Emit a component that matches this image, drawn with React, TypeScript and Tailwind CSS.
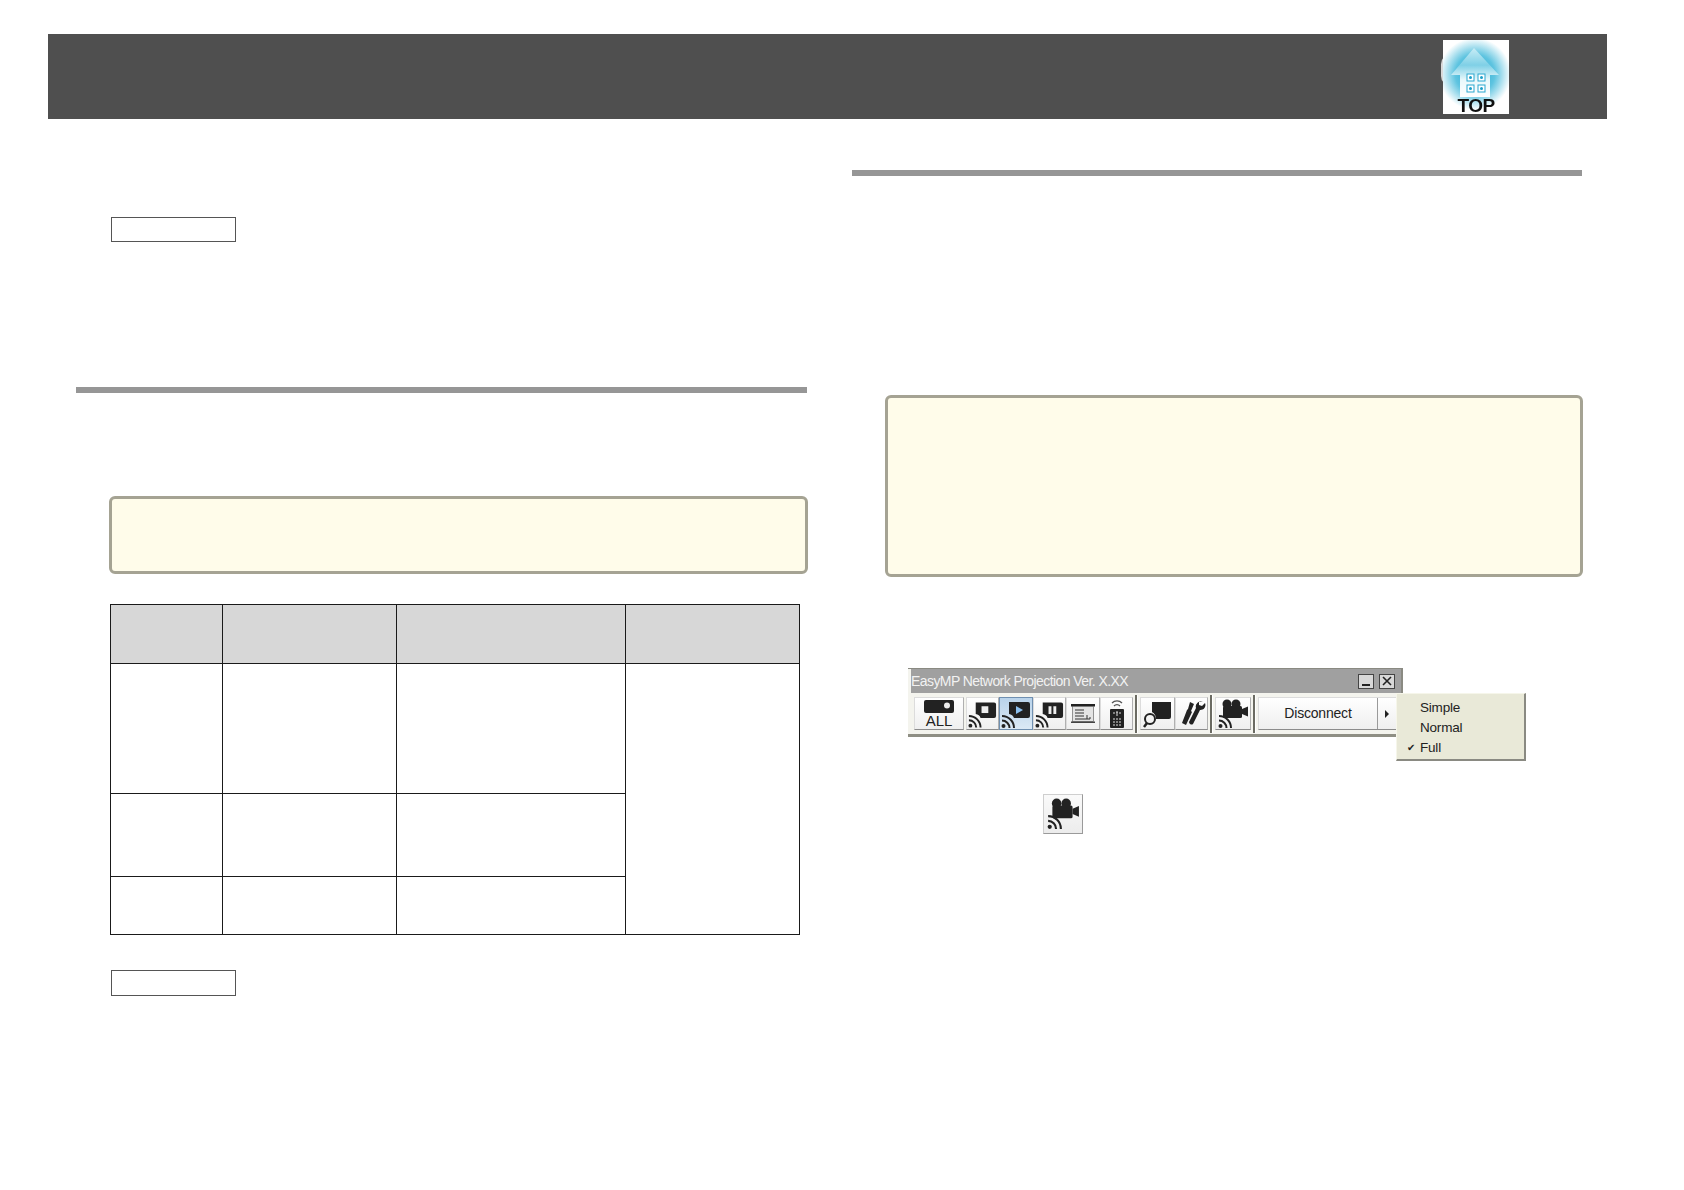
import React from 'react';

function Wifi({ color = '#222' }: { color?: string }) {
  return (
    <g fill="none" stroke={color} strokeWidth="2">
      <circle cx="3.5" cy="28" r="2" fill={color} stroke="none" />
      <path d="M2 22.5a7.5 7.5 0 0 1 7.5 7.5" />
      <path d="M2 18a12 12 0 0 1 12 12" />
    </g>
  );
}

function Screen({ children }: { children?: React.ReactNode }) {
  return (
    <svg width="32" height="32" viewBox="0 0 32 32">
      <path d="M9 4h19a2 2 0 0 1 2 2v12a2 2 0 0 1-2 2H14a6 6 0 0 0-5-4z" fill="#222" />
      {children}
      <Wifi />
    </svg>
  );
}

function ToolButton({ children, active = false, w = 'w-[33px]' }: { children: React.ReactNode; active?: boolean; w?: string }) {
  return (
    <div
      className={`${w} h-[33px] flex items-center justify-center border ${
        active
          ? 'border-[#6f8fb0] bg-gradient-to-b from-[#b9d3ea] to-[#dbe9f5]'
          : 'border-[#dcdcdc] border-b-[#8c8c8c] border-r-[#b0b0b0] bg-gradient-to-b from-white to-[#efefef]'
      }`}
    >
      {children}
    </div>
  );
}

function Divider() {
  return <div className="w-[3px] h-[38px] bg-[#6b6b62] border-r border-white mx-[2px]" />;
}

function CameraIcon({ size = 32 }: { size?: number }) {
  return (
    <svg width={size} height={size} viewBox="0 0 32 32">
      <circle cx="10" cy="6" r="4.5" fill="#222" />
      <circle cx="19" cy="6" r="4.5" fill="#222" />
      <rect x="6" y="8" width="19" height="12" rx="1.5" fill="#222" />
      <path d="M25 11l6-2.500v10L25 16z" fill="#222" />
      <Wifi />
    </svg>
  );
}

function Toolbar() {
  return (
    <div className="relative w-[496px] ml-[23px] mt-[91px] blur-[0.3px]">
      <div className="w-[495px] border-t border-r-2 border-[#8a8a82] bg-[#f4f4ee]">
        <div className="h-[24px] ml-[3px] bg-[#a0a0a0] flex items-center justify-between pr-[6px]">
          <span className="text-[14px] leading-none text-[#f2f2f2] font-['Liberation_Sans',sans-serif] tracking-[-0.57px]">
            EasyMP Network Projection Ver. X.XX
          </span>
          <div className="flex gap-[5px]">
            <div className="w-[16px] h-[15px] border border-[#444] bg-[#d8d8d8] flex items-end justify-center pb-[2px]">
              <div className="w-[8px] h-[2px] bg-[#222]" />
            </div>
            <div className="w-[16px] h-[15px] border border-[#444] bg-[#d8d8d8] flex items-center justify-center">
              <svg width="10" height="10" viewBox="0 0 10 10">
                <path d="M1 1l8 8M9 1l-8 8" stroke="#222" strokeWidth="1.6" />
              </svg>
            </div>
          </div>
        </div>
        <div className="h-[44px] flex items-center pl-[6px] border-b-[3px] border-[#8f8f84]">
          <ToolButton w="w-[50px]">
            <div className="flex flex-col items-center">
              <svg width="32" height="15" viewBox="0 0 32 15">
                <rect x="1" y="1" width="30" height="13" rx="2" fill="#222" />
                <circle cx="24" cy="6.500" r="3" fill="#eee" />
              </svg>
              <span className="text-[15px] leading-[14px] text-[#222] font-['Liberation_Sans',sans-serif]">ALL</span>
            </div>
          </ToolButton>
          <div className="w-[2px]" />
          <ToolButton>
            <Screen><rect x="15" y="8" width="7" height="7" fill="#eee" /></Screen>
          </ToolButton>
          <ToolButton w="w-[34px]" active>
            <Screen><path d="M16 8l7 4-7 4z" fill="#8cc0ee" /></Screen>
          </ToolButton>
          <ToolButton>
            <Screen><path d="M15 8h3v8h-3zM20 8h3v8h-3z" fill="#eee" /></Screen>
          </ToolButton>
          <ToolButton w="w-[34px]">
            <svg width="28" height="28" viewBox="0 0 28 28">
              <rect x="2" y="4" width="24" height="2.500" fill="#222" />
              <rect x="3.500" y="6.500" width="21" height="15" fill="#e4e4e4" stroke="#555" strokeWidth=".6" />
              <path d="M6 10h9M6 13h9M6 16h9M6 19h15M18 15v4M21 17v2" stroke="#333" strokeWidth="1" />
              <rect x="2" y="21.500" width="24" height="1.500" fill="#444" />
            </svg>
          </ToolButton>
          <ToolButton>
            <svg width="22" height="30" viewBox="0 0 22 30">
              <path d="M6 4a7 7 0 0 1 10 0M8 7a4 4 0 0 1 6 0" fill="none" stroke="#555" strokeWidth="1.300" />
              <rect x="4" y="10" width="14" height="19" rx="1" fill="#222" />
              <path d="M7 14h8M11 12v5M7 20h8M7 23h8M7 26h8" stroke="#ddd" strokeWidth="1" strokeDasharray="2 1" />
            </svg>
          </ToolButton>
          <Divider />
          <ToolButton w="w-[35px]">
            <svg width="32" height="32" viewBox="0 0 32 32">
              <path d="M10 4h19v15a2 2 0 0 1-2 2H14a8 8 0 0 0-4-7z" fill="#222" />
              <circle cx="8" cy="21" r="5" fill="none" stroke="#222" strokeWidth="2" />
              <path d="M5 25l-3 4" stroke="#222" strokeWidth="2.500" />
            </svg>
          </ToolButton>
          <ToolButton>
            <svg width="30" height="30" viewBox="0 0 30 30">
              <path d="M13 3l4 2-3 7 1 1-6 13-4-2 5-13 1-1z" fill="#222" />
              <path d="M26 3a5 5 0 0 0-7 6l-7 14a2.500 2.500 0 0 0 4 2l7-14a5 5 0 0 0 5-7l-3 3-3-1 0-3z" fill="#222" />
            </svg>
          </ToolButton>
          <Divider />
          <ToolButton w="w-[36px]"><CameraIcon /></ToolButton>
          <Divider />
          <div className="flex h-[33px] border-[#dcdcdc] border border-b-[#8c8c8c] bg-gradient-to-b from-white to-[#efefef]">
            <div className="w-[118px] flex items-center justify-center text-[14px] tracking-[-0.2px] text-[#222] font-['Liberation_Sans',sans-serif]">
              Disconnect
            </div>
            <div className="w-[19px] border-l border-[#9a9a9a] flex items-center justify-center">
              <div className="w-0 h-0 border-y-[4px] border-y-transparent border-l-[4px] border-l-[#222]" />
            </div>
          </div>
        </div>
      </div>
      {/* popup menu */}
      <div className="absolute left-[488px] top-[25px] w-[130px] h-[68px] bg-[#e9e9d8] border-t border-l border-[#f6f6ea] border-r-2 border-b-2 border-r-[#8a8a82] border-b-[#8a8a82] flex flex-col pt-[4px] text-[13.500px] tracking-[-0.2px] leading-[20px] text-[#222] font-['Liberation_Sans',sans-serif]">
        <div className="pl-[23px]">Simple</div>
        <div className="pl-[23px]">Normal</div>
        <div className="pl-[23px] relative">
          <span className="absolute left-[10px] top-0 text-[10px]">✔</span>
          Full
        </div>
      </div>
    </div>
  );
}

function TopIcon() {
  return (
    <div className="relative">
      {/* the disc peeks out past the white plate */}
      <div className="absolute left-[-2px] top-[14px] w-[10px] h-[32px] rounded-l-full bg-[#d9d9d9]" />
      <div className="relative w-[66px] h-[74px] bg-white blur-[0.4px]">
        <svg width="66" height="74" viewBox="0 0 66 74">
          <defs>
            <radialGradient id="glow" cx="50%" cy="50%" r="50%">
              <stop offset="0%" stopColor="#1aa5d0" />
              <stop offset="55%" stopColor="#5fc4e0" />
              <stop offset="100%" stopColor="#ffffff" />
            </radialGradient>
            <linearGradient id="arrow" x1="0" y1="0" x2="0" y2="1">
              <stop offset="0%" stopColor="#c8edf6" />
              <stop offset="35%" stopColor="#7fd0e6" />
              <stop offset="65%" stopColor="#e8f8fb" />
              <stop offset="100%" stopColor="#ffffff" />
            </linearGradient>
          </defs>
          <circle cx="32" cy="34" r="36" fill="url(#glow)" />
          <path d="M31 8L56 35H47V57H17V35H8z" fill="url(#arrow)" />
          <g fill="#ffffff" stroke="#2aa7cf" strokeWidth="1">
            <rect x="24" y="34" width="7" height="7" />
            <rect x="35" y="34" width="7" height="7" />
            <rect x="24" y="45" width="7" height="7" />
            <rect x="35" y="45" width="7" height="7" />
          </g>
          <g fill="#1b9fc9">
            <circle cx="27.500" cy="37.500" r="1.500" />
            <circle cx="38.500" cy="37.500" r="1.500" />
            <circle cx="27.500" cy="48.500" r="1.500" />
            <circle cx="38.500" cy="48.500" r="1.500" />
          </g>
        </svg>
        <span className="absolute left-0 right-0 bottom-0 text-center text-[19px] leading-[17px] font-bold text-[#111] font-['Liberation_Sans',sans-serif] tracking-[-0.5px]">
          TOP
        </span>
      </div>
    </div>
  );
}

function LeftColumn() {
  return (
    <div className="w-[731px]">
      <div className="ml-[35px] mt-[98px] w-[125px] h-[25px] border-[1.5px] border-[#555]" />
      <div className="mt-[145px] h-[6px] bg-[#969696]" />
      <div className="ml-[33px] -mr-[1px] mt-[103px] h-[78px] rounded-[6px] border-[3px] border-[#a5a393] bg-[#fffcea]" />
      <table className="ml-[34px] mt-[30px] w-[689px] table-fixed border-collapse [&_td]:border-[1.5px] [&_td]:border-[#1a1a1a]">
        <colgroup>
          <col className="w-[112px]" />
          <col className="w-[174px]" />
          <col className="w-[229px]" />
          <col className="w-[174px]" />
        </colgroup>
        <tbody>
          <tr className="h-[59px] bg-[#d7d7d7]">
            <td /><td /><td /><td />
          </tr>
          <tr className="h-[130px]">
            <td /><td /><td />
            <td rowSpan={3} />
          </tr>
          <tr className="h-[83px]">
            <td /><td /><td />
          </tr>
          <tr className="h-[58px]">
            <td /><td /><td />
          </tr>
        </tbody>
      </table>
      <div className="ml-[35px] mt-[35px] w-[125px] h-[26px] border-[1.5px] border-[#555]" />
    </div>
  );
}

function RightColumn() {
  return (
    <div className="w-[730px] ml-[45px]">
      <div className="mt-[51px] h-[6px] bg-[#969696]" />
      <div className="ml-[33px] -mr-[1px] mt-[219px] h-[182px] rounded-[6px] border-[3px] border-[#a5a393] bg-[#fffcea]" />
      <div className="relative z-10 pl-[33px]"><Toolbar /></div>
      <div className="ml-[191px] mt-[57px] w-[40px] h-[40px] border border-[#cfcfcf] border-b-[#9a9a9a] border-r-[#9a9a9a] bg-gradient-to-b from-[#fafafa] to-[#ececec] flex items-center justify-center blur-[0.4px]">
        <CameraIcon size={34} />
      </div>
    </div>
  );
}

export default function App() {
  return (
    <div className="w-[1684px] h-[1190px] bg-white pt-[34px] overflow-hidden">
      <div className="ml-[48px] w-[1559px] h-[85px] bg-[#4f4f4f] flex justify-end items-center pr-[98px]">
        <TopIcon />
      </div>
      <div className="flex pl-[76px]">
        <LeftColumn />
        <RightColumn />
      </div>
    </div>
  );
}
